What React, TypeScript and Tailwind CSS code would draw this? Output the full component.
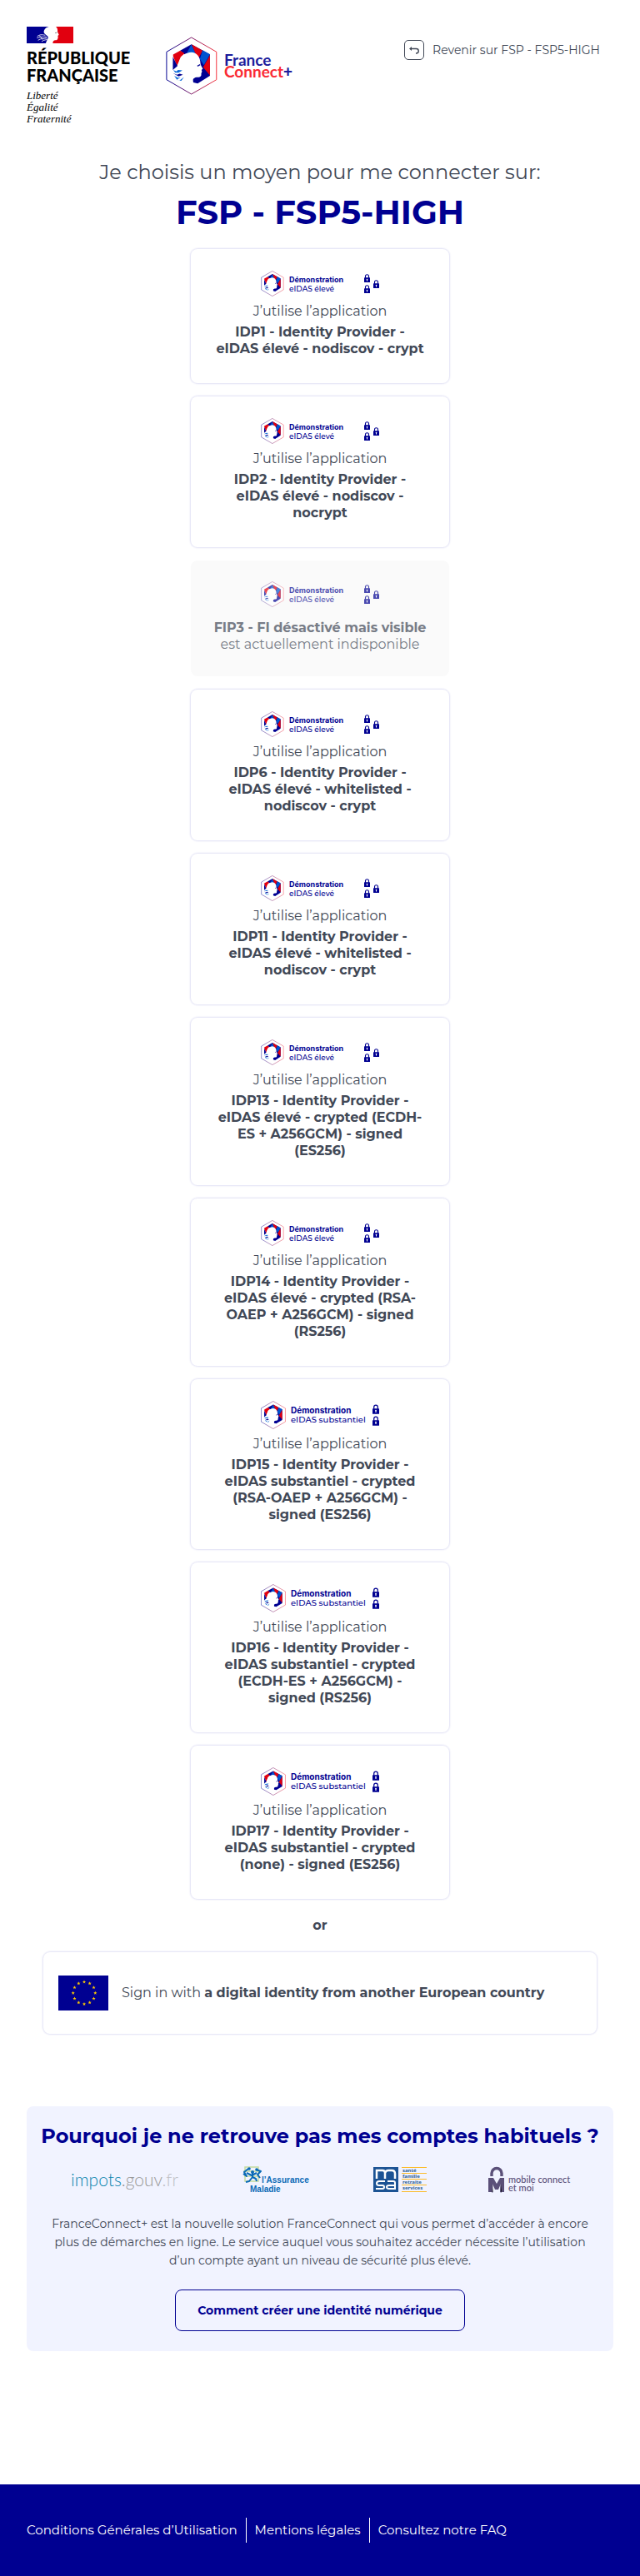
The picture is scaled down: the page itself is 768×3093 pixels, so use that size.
import React from "react";

type Level = "high" | "substantial";

interface Provider {
  id: string;
  level: Level;
  lines: string[];
  disabled?: boolean;
}

const providers: Provider[] = [
  { id: "idp1", level: "high", lines: ["IDP1 - Identity Provider -", "eIDAS élevé - nodiscov - crypt"] },
  { id: "idp2", level: "high", lines: ["IDP2 - Identity Provider -", "eIDAS élevé - nodiscov -", "nocrypt"] },
  { id: "fip3", level: "high", lines: ["FIP3 - FI désactivé mais visible"], disabled: true },
  { id: "idp6", level: "high", lines: ["IDP6 - Identity Provider -", "eIDAS élevé - whitelisted -", "nodiscov - crypt"] },
  { id: "idp11", level: "high", lines: ["IDP11 - Identity Provider -", "eIDAS élevé - whitelisted -", "nodiscov - crypt"] },
  { id: "idp13", level: "high", lines: ["IDP13 - Identity Provider -", "eIDAS élevé - crypted (ECDH-", "ES + A256GCM) - signed", "(ES256)"] },
  { id: "idp14", level: "high", lines: ["IDP14 - Identity Provider -", "eIDAS élevé - crypted (RSA-", "OAEP + A256GCM) - signed", "(RS256)"] },
  { id: "idp15", level: "substantial", lines: ["IDP15 - Identity Provider -", "eIDAS substantiel - crypted", "(RSA-OAEP + A256GCM) -", "signed (ES256)"] },
  { id: "idp16", level: "substantial", lines: ["IDP16 - Identity Provider -", "eIDAS substantiel - crypted", "(ECDH-ES + A256GCM) -", "signed (RS256)"] },
  { id: "idp17", level: "substantial", lines: ["IDP17 - Identity Provider -", "eIDAS substantiel - crypted", "(none) - signed (ES256)"] },
];

function Hexagon({ className, id }: { className: string; id: string }) {
  return (
    <svg className={className} viewBox="596 130 188 214" aria-hidden="true">
      <defs>
        <linearGradient id={id} x1="0" x2="1" y1="0" y2="0">
          <stop offset="0" stopColor="#000091" />
          <stop offset="1" stopColor="#f5303a" />
        </linearGradient>
      </defs>
      <polygon points="689,133 781,186 781,288 689,341 598,288 598,186" fill="#fff" stroke={`url(#${id})`} strokeWidth="3" />
      <polygon points="689,158 648,181 664,196 689,188" fill="#000091" />
      <polygon points="689,158 757,195 757,274 712,302 696,298 694,286 704,278 722,262 716,210 689,190" fill="#000091" />
      <polygon points="689,158 672,190 704,190" fill="#0053cf" />
      <polygon points="690,158 730,181 716,208 704,192" fill="#e1000f" />
      <polygon points="730,180 757,195 735,235 720,212" fill="#0053cf" />
      <polygon points="757,198 757,272 732,242" fill="#e1000f" />
      <polygon points="648,181 622,196 622,202 636,238 650,204 664,192" fill="#e1000f" />
      <polygon points="621,204 638,238 621,252" fill="#000091" />
      <path d="M689 187C668 188 650 200 645 220C640 238 642 252 654 266C662 276 664 288 664 303H694C692 288 696 280 708 279C724 280 726 274 725 266L728 258L726 252L731 248C727 240 722 234 722 226C722 204 708 188 689 187Z" fill="#fff" />
      <path d="M622 252L634 258L640 252L656 254L642 262L630 262Z" fill="#0b6ad8" />
      <path d="M621 264L636 270L646 266L658 270L642 276Z" fill="#000091" />
      <path d="M626 274L640 281L650 278L636 288M632 289L645 291L662 278L652 292Z" fill="#0b6ad8" />
      <path d="M711 238L721 233" stroke="#000091" strokeWidth="4" />
    </svg>
  );
}

function RepublicFlag() {
  return (
    <svg className="h-5 w-14" viewBox="96 96 168 60" aria-hidden="true">
      <rect x="96" y="96" width="168" height="60" fill="#fff" />
      <path d="M96 96H176C164 99 157 108 158 117C160 124 170 127 173 133C174 140 168 145 165 156H96Z" fill="#000091" />
      <path d="M264 96H201C207 101 208 108 207 114L212 125L208 129L209 134C208 143 205 145 198 145C192 146 190 151 190 156H264Z" fill="#e1000f" />
      <path d="M134 131C143 124 150 124 163 127M133 137C143 132 151 133 168 133M137 145C148 137 156 141 170 137M150 150C156 144 160 145 170 142M142 128L154 143" fill="none" stroke="#fff" strokeWidth="2.5" />
      <path d="M198 119L206 117" stroke="#555" strokeWidth="2" />
    </svg>
  );
}

function Lock({ className }: { className: string }) {
  return (
    <svg className={className} viewBox="0 0 14 20" aria-hidden="true">
      <path d="M3 10V5.500a4 4 0 0 1 8 0V10" fill="none" stroke="#000091" strokeWidth="2.200" />
      <rect x="0" y="8.500" width="14" height="11.500" rx="1" fill="#000091" />
      <path d="M7 11.500a1.600 1.600 0 0 1 1 2.900v2.600H6v-2.600a1.600 1.600 0 0 1 1-2.900Z" fill="#fff" />
    </svg>
  );
}

function DemoLogo({ level, id }: { level: Level; id: string }) {
  if (level === "high") {
    return (
      <span className="flex h-[31px] w-[142px] items-center">
        <Hexagon id={id} className="h-[31px] w-7 shrink-0" />
        <span className="ml-[6px] flex-1 whitespace-nowrap text-left text-[#000091]">
          <b className="block font-['Inter',sans-serif] text-[9px] leading-[11px] font-bold">Démonstration</b>
          <span className="block text-[9px] leading-[11px] font-medium">eIDAS élevé</span>
        </span>
        <span className="flex items-center gap-1">
          <span className="flex flex-col gap-[3px]">
            <Lock className="h-2.5 w-[7px]" />
            <Lock className="h-2.5 w-[7px]" />
          </span>
          <Lock className="h-2.5 w-[7px]" />
        </span>
      </span>
    );
  }
  return (
    <span className="flex h-[34px] w-[142px] items-center">
      <Hexagon id={id} className="h-[34px] w-[30px] shrink-0" />
      <span className="ml-[6px] flex-1 whitespace-nowrap text-left text-[#000091]">
        <b className="block font-['Inter',sans-serif] text-[10px] leading-3 font-bold">Démonstration</b>
        <span className="block text-[10px] leading-3 font-medium">eIDAS substantiel</span>
      </span>
      <span className="flex flex-col gap-0.5">
        <Lock className="h-3 w-2" />
        <Lock className="h-3 w-2" />
      </span>
    </span>
  );
}

function ProviderCard({ provider }: { provider: Provider }) {
  const name = provider.lines.join("\n");
  if (provider.disabled) {
    return (
      <button
        type="button"
        disabled
        className="flex w-full flex-col items-center rounded-lg bg-[#fafafa] pt-[25px] pb-7"
      >
        <span className="flex flex-col items-center opacity-70">
          <DemoLogo level={provider.level} id={provider.id} />
          <b className="mt-[15px] text-[16px] leading-5 font-bold whitespace-pre-line">{name}</b>
          <span className="text-[16px] leading-5">est actuellement indisponible</span>
        </span>
      </button>
    );
  }
  return (
    <button
      type="button"
      className="flex w-full cursor-pointer flex-col items-center rounded-lg bg-white pt-[26px] pb-[31px] shadow-[0_0_2px_1px_#e0e0f4]"
    >
      <DemoLogo level={provider.level} id={provider.id} />
      <span className="mt-[6px] text-[16px] leading-6">J’utilise l’application</span>
      <b className="mt-[3px] text-[16px] leading-5 font-bold whitespace-pre-line">{name}</b>
    </button>
  );
}

const starAngles = [0, 30, 60, 90, 120, 150, 180, 210, 240, 270, 300, 330];

function EuropeanFlag() {
  return (
    <svg className="h-[42px] w-[60px] shrink-0" viewBox="0 0 60 42" aria-hidden="true">
      <rect width="60" height="42" fill="#000091" />
      {starAngles.map((angle) => {
        const x = 31 + 13.3 * Math.sin((angle * Math.PI) / 180);
        const y = 21 - 13.3 * Math.cos((angle * Math.PI) / 180);
        return (
          <polygon
            key={angle}
            transform={`translate(${x} ${y})`}
            points="0,-2.2 0.6,-0.7 2.1,-0.7 0.9,0.3 1.3,1.8 0,0.9 -1.3,1.8 -0.9,0.3 -2.1,-0.7 -0.6,-0.7"
            fill="#fecb00"
          />
        );
      })}
    </svg>
  );
}

function PartnerLogos() {
  return (
    <ul className="mt-5 flex h-8 items-center justify-between px-[53px]">
      <li className="w-[132px] text-left font-['Lato',sans-serif] text-[21px] leading-8 font-light whitespace-nowrap text-[#0b86b0]">
        impots<span className="text-[#999]">.gouv</span>
        <span className="text-[#c0c0c4]">.fr</span>
      </li>
      <li>
        <svg className="h-8 w-[82px] overflow-visible" viewBox="0 0 82 32" role="img" aria-label="l'Assurance Maladie">
          <path d="M3 1H19V18H3ZM1 6H20M2 12H20" fill="none" stroke="#c3dba0" strokeWidth="1.500" />
          <circle cx="8" cy="3" r="1.800" fill="#0a6ab6" />
          <circle cx="17" cy="4" r="1.800" fill="#0a6ab6" />
          <circle cx="12" cy="7" r="2" fill="#0a6ab6" />
          <path d="M7 3L2 7L5 12L1 9M16 4L22 6L18 10L21 14M12 8V13L8 18L4 19M12 13L16 15L17 18M5 8L11 11L17 8" fill="none" stroke="#0a6ab6" strokeWidth="2" strokeLinejoin="round" />
          <text x="23" y="20" fontSize="10" fontWeight="700" fontFamily="'Liberation Sans', sans-serif" fill="#0a6ab6">l’Assurance</text>
          <text x="9" y="31" fontSize="10" fontWeight="700" fontFamily="'Liberation Sans', sans-serif" fill="#0a6ab6">Maladie</text>
        </svg>
      </li>
      <li>
        <svg className="h-8 w-[64px] overflow-visible" viewBox="0 0 64 32" role="img" aria-label="MSA santé famille retraite services">
          <rect x="0" y="1" width="30" height="30" fill="#1c5394" />
          <path d="M4 15V5H11Q14 5 14 8V15M14 8Q15 5 18 5H22Q26 5 26 9V15" fill="none" stroke="#fff" strokeWidth="2.500" />
          <path d="M14 18H7Q4 18 4 20.500T7 23H11Q13 23 13 25T11 27H3M17 18H24Q26 18 26 20V27H19Q16 27 16 25T19 23H26" fill="none" stroke="#fff" strokeWidth="2" />
          <path d="M34 1.500H64M34 8.500H64M34 15.500H64M34 22.500H64M34 30.500H64" stroke="#fbbc2c" strokeWidth="1" />
          <g fontSize="6" fontWeight="700" fontFamily="'Noto Sans', sans-serif" fill="#2d6096">
            <text x="35" y="7">santé</text>
            <text x="35" y="14">famille</text>
            <text x="35" y="21">retraite</text>
            <text x="35" y="28">services</text>
          </g>
        </svg>
      </li>
      <li>
        <svg className="h-8 w-[97px] overflow-visible" viewBox="0 0 97 32" role="img" aria-label="mobile connect et moi">
          <path d="M4 12V8.500a6 6 0 0 1 12 0V12" fill="none" stroke="#5b5079" strokeWidth="3.400" />
          <path d="M0 14H6L10 21L14 14H19V31H15V21L12 28H8L5 21V31H0Z" fill="#5b5079" />
          <path d="M5 21L4 31H5.500M15 21L14.500 31H16" stroke="#5b5079" strokeWidth="1" />
          <g fontSize="11" fontWeight="500" fontFamily="Lato, sans-serif" fill="#5b5079">
            <text x="24" y="20">mobile connect</text>
            <text x="24" y="30">et moi</text>
          </g>
        </svg>
      </li>
    </ul>
  );
}

export default function App() {
  return (
    <div className="min-h-screen bg-white font-['Montserrat','Inter',sans-serif] text-[#414856]">
      <header className="flex items-start justify-between pt-8 pr-12 pl-8">
        <div className="flex items-start">
          <div className="w-[167px]">
            <RepublicFlag />
            <div className="mt-[7px] font-['Lato',sans-serif] text-[20px] leading-[21px] font-black text-black">
              RÉPUBLIQUE
              <br />
              FRANÇAISE
            </div>
            <div className="mt-[7px] font-['Liberation_Serif',serif] text-[13px] leading-[14px] text-black italic">
              Liberté
              <br />
              Égalité
              <br />
              Fraternité
            </div>
          </div>
          <div className="mt-3 flex items-center">
            <Hexagon id="brand" className="h-[70px] w-[62px]" />
            <div className="ml-2 font-['Lato',sans-serif] text-[19px] leading-[14px] font-bold text-[#1c1c9c]">
              France
              <br />
              <span className="text-[#fa2a34]">Connect</span>
              <span className="font-black">+</span>
            </div>
          </div>
        </div>
        <a href="#retour" className="mt-4 flex items-center gap-[10px] text-[14px] leading-6">
          <svg className="size-6" viewBox="0 0 24 24" fill="none" aria-hidden="true">
            <rect x="0.500" y="0.500" width="23" height="23" rx="4.500" stroke="#414856" />
            <path d="M8 10.500H14.500a2.700 2.700 0 0 1 0 5.500H14" stroke="#414856" strokeWidth="1.400" />
            <path d="M6 10.500L9 8V13Z" fill="#414856" />
          </svg>
          Revenir sur FSP - FSP5-HIGH
        </a>
      </header>

      <main>
        <h1 className="mt-[41px] text-center">
          <span className="block text-[24px] leading-8 font-normal">Je choisis un moyen pour me connecter sur:</span>
          <span className="mt-2 block text-[40px] leading-[48px] font-bold text-[#000091]">FSP - FSP5-HIGH</span>
        </h1>

        <section className="mx-auto mt-5 flex w-full max-w-[310px] flex-col gap-4">
          {providers.map((provider) => (
            <ProviderCard key={provider.id} provider={provider} />
          ))}
        </section>

        <p className="mt-5 text-center text-[16px] leading-6 font-bold">or</p>

        <section className="mx-[52px] mt-5">
          <button
            type="button"
            className="flex w-full cursor-pointer items-center rounded-lg bg-white px-[18px] py-7 text-left text-[16px] leading-6 shadow-[0_0_2px_1px_#e0e0f4]"
          >
            <EuropeanFlag />
            <span className="ml-4">
              Sign in with <b className="font-bold">a digital identity from another European country</b>
            </span>
          </button>
        </section>

        <section className="mx-8 mt-[87px] rounded-lg bg-[#f1f3ff] pt-5 pb-6 text-center">
          <h2 className="text-[24px] leading-8 font-bold text-[#000091]">Pourquoi je ne retrouve pas mes comptes habituels ?</h2>
          <PartnerLogos />
          <p className="mt-[26px] text-[14px] leading-[22px]">
            FranceConnect+ est la nouvelle solution FranceConnect qui vous permet d’accéder à encore
            <br />
            plus de démarches en ligne. Le service auquel vous souhaitez accéder nécessite l’utilisation
            <br />
            d’un compte ayant un niveau de sécurité plus élevé.
          </p>
          <div className="mt-6 flex justify-center">
            <a
              href="#identite"
              className="rounded-lg border border-[#000091] px-[26px] py-3 text-[14px] leading-6 font-bold text-[#000091]"
            >
              Comment créer une identité numérique
            </a>
          </div>
        </section>
      </main>

      <footer className="mt-40 bg-[#000091] px-8 py-10 text-[15px] leading-[30px] text-white">
        <nav className="flex">
          <a href="#cgu" className="border-r border-white pr-[10px]">Conditions Générales d’Utilisation</a>
          <a href="#mentions" className="border-r border-white px-[10px]">Mentions légales</a>
          <a href="#faq" className="pl-[10px]">Consultez notre FAQ</a>
        </nav>
      </footer>
    </div>
  );
}
